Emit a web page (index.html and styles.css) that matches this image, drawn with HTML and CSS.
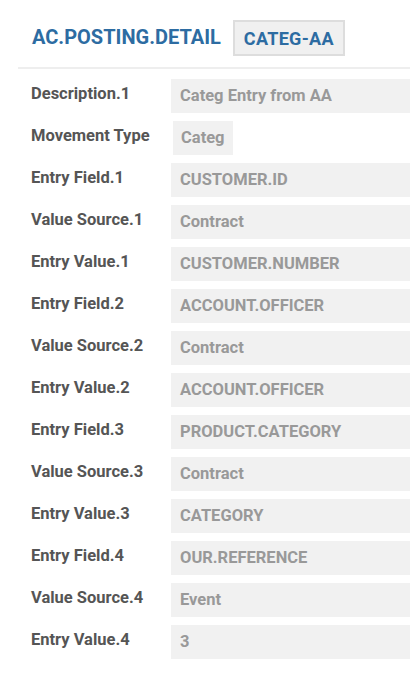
FILE: index.html
```html
<!DOCTYPE html>
<html>
<head>
<meta charset="utf-8">
<link rel="stylesheet" href="styles.css">
</head>
<body>
<div class="page">
  <header class="head">
    <h1 class="title">AC.POSTING.DETAIL</h1>
    <span class="badge">CATEG-AA</span>
  </header>
  <div class="divider"></div>
  <div class="fields">
    <div class="label">Description.1</div><div class="value">Categ Entry from AA</div>
    <div class="label">Movement Type</div><div class="cell"><span class="value chip">Categ</span></div>
    <div class="label">Entry Field.1</div><div class="value">CUSTOMER.ID</div>
    <div class="label">Value Source.1</div><div class="value">Contract</div>
    <div class="label">Entry Value.1</div><div class="value">CUSTOMER.NUMBER</div>
    <div class="label">Entry Field.2</div><div class="value">ACCOUNT.OFFICER</div>
    <div class="label">Value Source.2</div><div class="value">Contract</div>
    <div class="label">Entry Value.2</div><div class="value">ACCOUNT.OFFICER</div>
    <div class="label">Entry Field.3</div><div class="value">PRODUCT.CATEGORY</div>
    <div class="label">Value Source.3</div><div class="value">Contract</div>
    <div class="label">Entry Value.3</div><div class="value">CATEGORY</div>
    <div class="label">Entry Field.4</div><div class="value">OUR.REFERENCE</div>
    <div class="label">Value Source.4</div><div class="value">Event</div>
    <div class="label">Entry Value.4</div><div class="value">3</div>
  </div>
</div>
</body>
</html>
```
FILE: styles.css
```css
html, body {
  margin: 0;
  padding: 0;
  background: #ffffff;
}
body {
  font-family: Roboto, "Liberation Sans", Arial, sans-serif;
  font-weight: 700;
}
.page {
  width: 410px;
  overflow: hidden;
}
.head {
  display: flex;
  align-items: center;
  gap: 12px;
  padding: 20px 0 0 32px;
  height: 36px;
}
.title {
  margin: 0;
  font-size: 20px;
  line-height: 24px;
  font-weight: 700;
  color: #2d6ca2;
  margin-top: -2px;
}
.badge {
  box-sizing: border-box;
  height: 36px;
  padding: 0 9px;
  display: flex;
  align-items: center;
  background: #f0f0f0;
  border: 2px solid #dddddd;
  color: #2d6ca2;
  font-size: 18px;
  letter-spacing: 0.3px;
}
.divider {
  height: 2px;
  background: #eeeeee;
  margin: 11px 0 0 18px;
}
.fields {
  display: grid;
  grid-template-columns: 140px 1fr;
  row-gap: 8px;
  padding: 10px 0 20px 31px;
}
.label {
  height: 34px;
  box-sizing: border-box;
  padding-top: 5px;
  font-size: 16.5px;
  line-height: 20px;
  color: #555555;
  white-space: nowrap;
}
.value {
  box-sizing: border-box;
  height: 34px;
  padding: 8px 9px;
  background: #f1f1f1;
  color: #999999;
  font-size: 16.5px;
  line-height: 18px;
  white-space: nowrap;
}
.cell {
  display: flex;
}
.chip {
  margin-left: 2px;
  padding: 8px 8px;
}
```
